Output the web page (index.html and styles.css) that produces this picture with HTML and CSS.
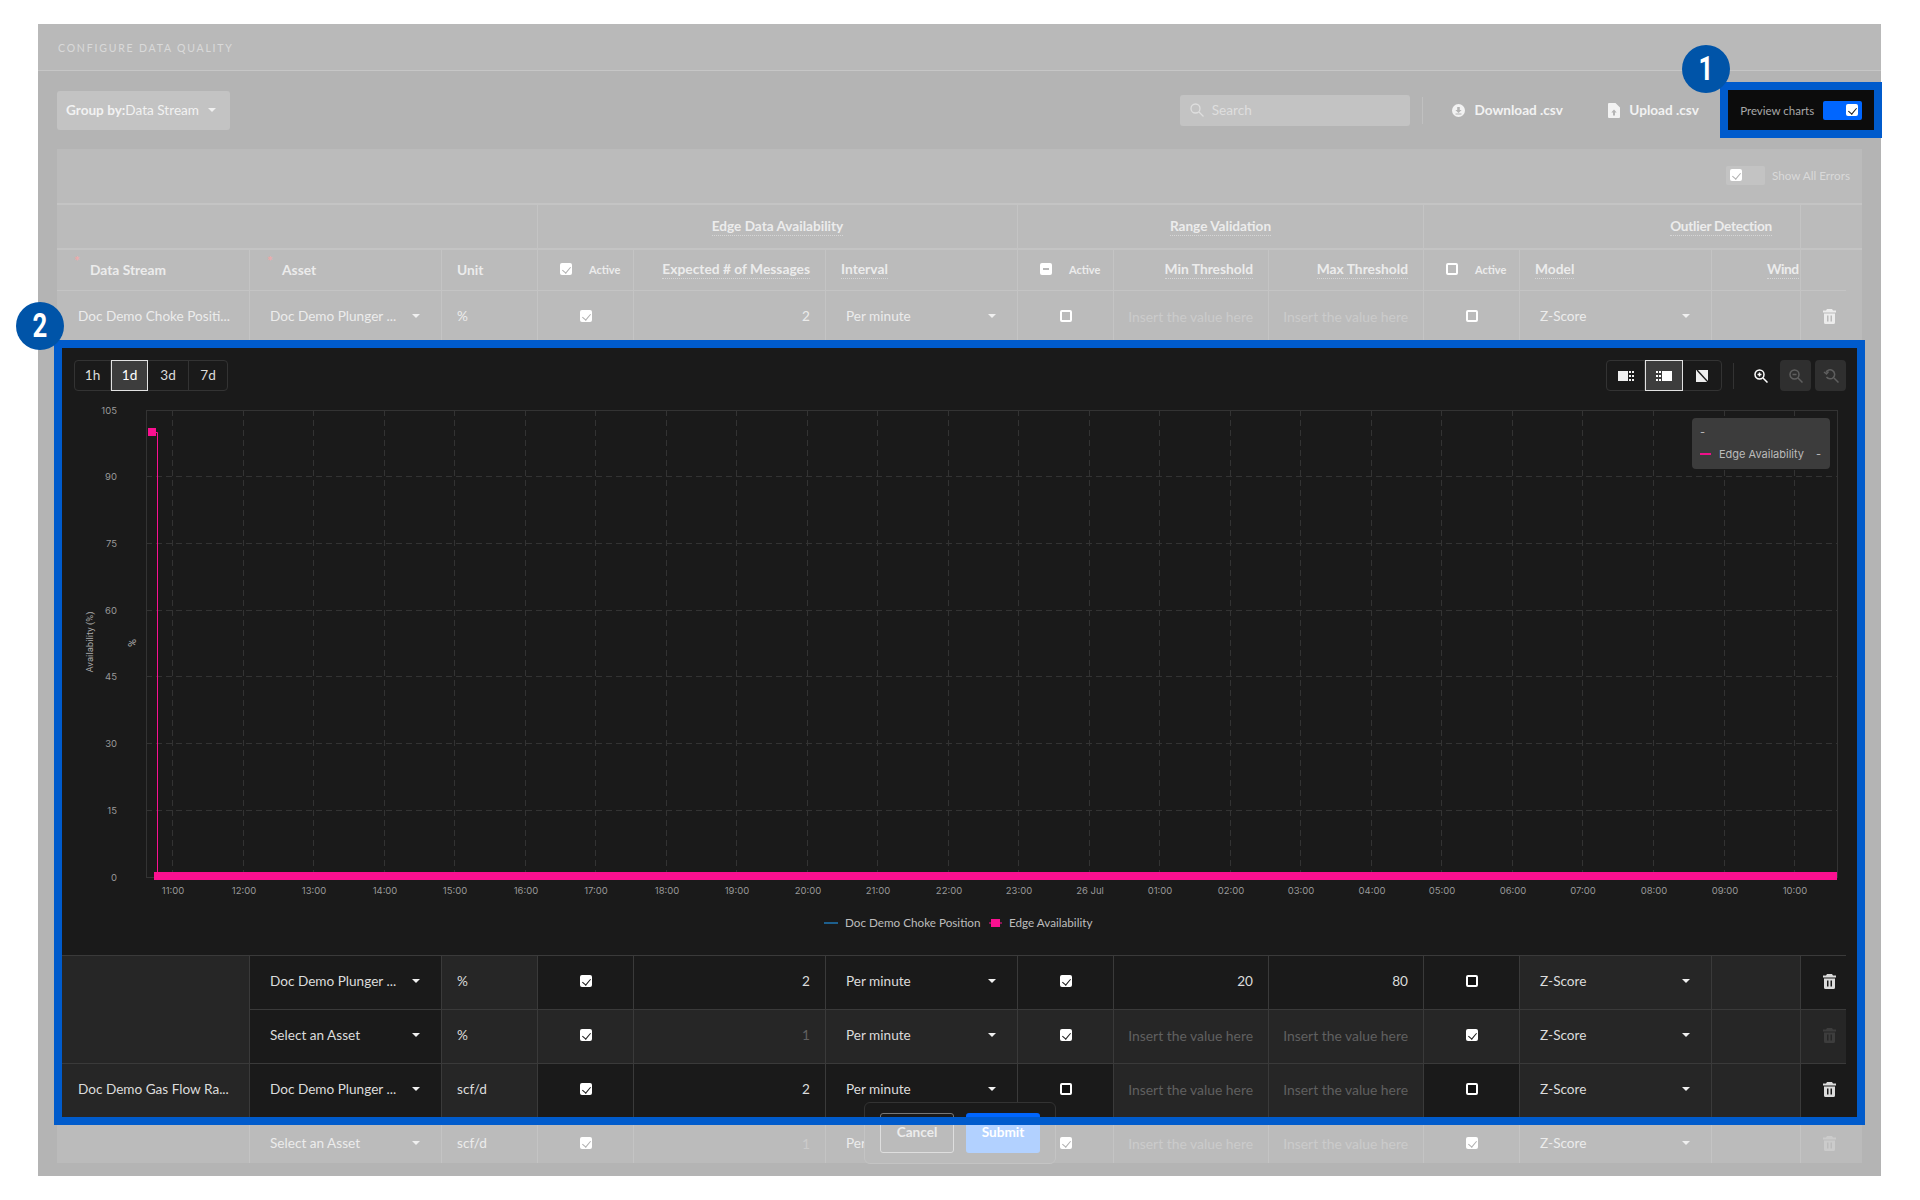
FILE: index.html
```html
<!DOCTYPE html>
<html lang="en">
<head>
    <meta charset="UTF-8">
    <title>Configure Data Quality</title>
    <link rel="stylesheet" href="styles.css">
</head>
<body>
    <svg class="defs" width="0" height="0">
        <symbol id="trash" viewBox="0 0 13 15">
            <path fill-rule="evenodd" d="M4 0h5l1 1.5h3v2H0v-2h3zM1 4.5h11v9a1.5 1.5 0 0 1-1.5 1.5h-8A1.5 1.5 0 0 1 1 13.5zM4 6.5v6h1.5v-6zM7.5 6.5v6H9v-6z"/>
        </symbol>
    </svg>

    <div class="page">
        <div class="badge badge-one"><span>1</span></div>
        <div class="badge badge-two"><span>2</span></div>

        <div class="title-bar">CONFIGURE DATA QUALITY</div>

        <div class="toolbar">
            <div class="group-by"><b>Group by:</b>Data Stream<i class="caret"></i></div>
            <div class="search">
                <svg width="14" height="14" viewBox="0 0 14 14" fill="none" stroke="currentColor" stroke-width="1.3"><circle cx="5.5" cy="5.5" r="4.5"/><path d="M9 9l4.5 4.5"/></svg>
                <span>Search</span>
            </div>
            <div class="divider"></div>
            <div class="action action-download">
                <svg width="13" height="13" viewBox="0 0 13 13"><path fill="currentColor" fill-rule="evenodd" d="M6.5 0a6.5 6.5 0 1 1 0 13a6.5 6.5 0 0 1 0-13zM5.2 3v3H3.4l3.1 3l3.1-3H7.800V3zM3.500 9.600v1h6v-1z"/></svg>
                Download .csv
            </div>
            <div class="action action-upload">
                <svg width="12" height="15" viewBox="0 0 12 15"><path fill="currentColor" fill-rule="evenodd" d="M1 0h6.500L12 4.500V14a1 1 0 0 1-1 1H1a1 1 0 0 1-1-1V1a1 1 0 0 1 1-1zM6 6.500L3.300 9.500h1.700v3h2v-3h1.700z"/></svg>
                Upload .csv
            </div>
            <div class="preview">
                <span>Preview charts</span>
                <div class="switch"><i class="check on"></i></div>
            </div>
        </div>

        <div class="table-wrap">
            <div class="errors-bar">
                <div class="errors-switch"><i class="check on"></i></div>
                <span>Show All Errors</span>
            </div>

            <div class="row-head groups">
                <div class="group-cell"></div>
                <div class="group-cell"><u>Edge Data Availability</u></div>
                <div class="group-cell"><u>Range Validation</u></div>
                <div class="group-cell outlier"><u>Outlier Detection</u></div>
                <div class="group-cell"></div>
            </div>

            <div class="row-head row">
                <div class="cell head pad"><em>*</em>Data Stream</div>
                <div class="cell head pad"><em>*</em>Asset</div>
                <div class="cell head unit">Unit</div>
                <div class="cell head active"><i class="check on"></i><small>Active</small></div>
                <div class="cell head num"><u>Expected # of Messages</u></div>
                <div class="cell head interval"><u>Interval</u></div>
                <div class="cell head active"><i class="check mixed"></i><small>Active</small></div>
                <div class="cell head num"><u>Min Threshold</u></div>
                <div class="cell head num"><u>Max Threshold</u></div>
                <div class="cell head active"><i class="check off"></i><small>Active</small></div>
                <div class="cell head model"><u>Model</u></div>
                <div class="cell head window"><u>Wind</u></div>
                <div class="cell head"></div>
            </div>

            <div class="row dim">
                <div class="cell pad">Doc Demo Choke Positi...</div>
                <div class="cell pad select">Doc Demo Plunger ...<i class="caret"></i></div>
                <div class="cell unit">%</div>
                <div class="cell center"><i class="check on"></i></div>
                <div class="cell num">2</div>
                <div class="cell pad select">Per minute<i class="caret"></i></div>
                <div class="cell center"><i class="check off"></i></div>
                <div class="cell num hint">Insert the value here</div>
                <div class="cell num hint">Insert the value here</div>
                <div class="cell center"><i class="check off"></i></div>
                <div class="cell pad select">Z-Score<i class="caret"></i></div>
                <div class="cell"></div>
                <div class="cell trash"><svg width="13" height="15"><use href="#trash"/></svg></div>
            </div>

            <div class="frame">
                <div class="chart-panel">
                    <div class="chart-tools">
                        <div class="segments">
                            <div class="seg seg-1h">1h</div>
                            <div class="seg seg-1d current">1d</div>
                            <div class="seg seg-3d">3d</div>
                            <div class="seg seg-7d">7d</div>
                        </div>
                        <div class="segments modes">
                            <div class="seg">
                                <svg width="16" height="10" viewBox="0 0 16 10" fill="#eee"><path d="M0 0h10v10H0z"/><path d="M11 0h2v2h-2zM14 0h2v2h-2zM11 4h2v2h-2zM14 4h2v2h-2zM11 8h2v2h-2zM14 8h2v2h-2z"/></svg>
                            </div>
                            <div class="seg current">
                                <svg width="16" height="10" viewBox="0 0 16 10" fill="#fff"><path d="M6 0h10v10H6z"/><path d="M0 0h2v2H0zM3 0h2v2H3zM0 4h2v2H0zM3 4h2v2H3zM0 8h2v2H0zM3 8h2v2H3z"/></svg>
                            </div>
                            <div class="seg">
                                <svg width="12" height="12" viewBox="0 0 12 12"><path fill="#eee" d="M0 0h12v12H0z"/><path stroke="#1a1a1a" stroke-width="1.400" d="M1 0l11 12"/></svg>
                            </div>
                        </div>
                        <div class="tool-divider"></div>
                        <div class="tool">
                            <svg width="14" height="14" viewBox="0 0 14 14" fill="none" stroke="#fff" stroke-width="1.500"><circle cx="5.500" cy="5.500" r="4.500"/><path d="M9 9l4.500 4.500M3.500 5.500h4M5.500 3.500v4"/></svg>
                        </div>
                        <div class="tool off">
                            <svg width="14" height="14" viewBox="0 0 14 14" fill="none" stroke="#5f5f5f" stroke-width="1.500"><circle cx="5.500" cy="5.500" r="4.500"/><path d="M9 9l4.500 4.500M3.500 5.500h4"/></svg>
                        </div>
                        <div class="tool off">
                            <svg width="16" height="14" viewBox="0 0 16 14" fill="none" stroke="#5f5f5f" stroke-width="1.500"><path d="M3 3.500a4.500 4.500 0 1 1 .5 4.500M11 9l4.500 4.500"/><path d="M1 3l2.500 2L5.500 2.500"/></svg>
                        </div>
                    </div>

                    <svg class="chart" width="1795" height="555" viewBox="62 400 1795 555">
                        <rect class="plot" x="146.500" y="410.500" width="1691" height="467"/>
                        <path class="grid" d="M172.500 410V877M243.500 410V877M313.500 410V877M384.500 410V877M454.500 410V877M525.500 410V877M595.500 410V877M666.500 410V877M736.500 410V877M807.500 410V877M877.500 410V877M948.500 410V877M1018.500 410V877M1089.500 410V877M1159.500 410V877M1230.500 410V877M1300.500 410V877M1371.500 410V877M1441.500 410V877M1512.500 410V877M1582.500 410V877M1653.500 410V877M1724.500 410V877M1794.500 410V877"/>
                        <path class="grid" d="M146 476.500H1838M146 543.500H1838M146 610.500H1838M146 676.500H1838M146 743.500H1838M146 810.500H1838"/>

                        <g class="y-labels">
                            <text x="117" y="414">105</text>
                            <text x="117" y="480">90</text>
                            <text x="117" y="547">75</text>
                            <text x="117" y="614">60</text>
                            <text x="117" y="680">45</text>
                            <text x="117" y="747">30</text>
                            <text x="117" y="814">15</text>
                            <text x="117" y="881">0</text>
                        </g>
                        <text class="axis-name" transform="translate(93 642) rotate(-90)">Availability (%)</text>
                        <text class="axis-name axis-unit" transform="translate(136 643) rotate(-90)">%</text>

                        <g class="x-labels">
                            <text x="173" y="894">11:00</text>
                            <text x="244" y="894">12:00</text>
                            <text x="314" y="894">13:00</text>
                            <text x="385" y="894">14:00</text>
                            <text x="455" y="894">15:00</text>
                            <text x="526" y="894">16:00</text>
                            <text x="596" y="894">17:00</text>
                            <text x="667" y="894">18:00</text>
                            <text x="737" y="894">19:00</text>
                            <text x="808" y="894">20:00</text>
                            <text x="878" y="894">21:00</text>
                            <text x="949" y="894">22:00</text>
                            <text x="1019" y="894">23:00</text>
                            <text x="1090" y="894">26 Jul</text>
                            <text x="1160" y="894">01:00</text>
                            <text x="1231" y="894">02:00</text>
                            <text x="1301" y="894">03:00</text>
                            <text x="1372" y="894">04:00</text>
                            <text x="1442" y="894">05:00</text>
                            <text x="1513" y="894">06:00</text>
                            <text x="1583" y="894">07:00</text>
                            <text x="1654" y="894">08:00</text>
                            <text x="1725" y="894">09:00</text>
                            <text x="1795" y="894">10:00</text>
                        </g>

                        <path class="series" d="M155 432.500h2.500V873"/>
                        <rect class="series-fill" x="148" y="428" width="8" height="8"/>
                        <rect class="series-fill" x="154" y="872" width="1683" height="8"/>

                        <path class="legend-line" d="M824 923h14"/>
                        <text class="legend" x="845" y="927">Doc Demo Choke Position</text>
                        <path class="series" d="M989 923h13"/>
                        <rect class="series-fill" x="991" y="919" width="9" height="8"/>
                        <text class="legend" x="1009" y="927">Edge Availability</text>
                    </svg>

                    <div class="chart-tip">
                        <div>-</div>
                        <div class="tip-row"><i></i><span>Edge Availability</span><span>-</span></div>
                    </div>
                </div>

                <div class="row lit">
                    <div class="cell raised"></div>
                    <div class="cell pad select">Doc Demo Plunger ...<i class="caret"></i></div>
                    <div class="cell raised unit">%</div>
                    <div class="cell center"><i class="check on"></i></div>
                    <div class="cell num">2</div>
                    <div class="cell pad select">Per minute<i class="caret"></i></div>
                    <div class="cell center"><i class="check on"></i></div>
                    <div class="cell num">20</div>
                    <div class="cell num">80</div>
                    <div class="cell center"><i class="check off"></i></div>
                    <div class="cell raised pad select">Z-Score<i class="caret"></i></div>
                    <div class="cell raised"></div>
                    <div class="cell trash"><svg width="13" height="15"><use href="#trash"/></svg></div>
                </div>
                <div class="row lit">
                    <div class="cell raised no-top"></div>
                    <div class="cell pad select">Select an Asset<i class="caret"></i></div>
                    <div class="cell raised unit">%</div>
                    <div class="cell raised center"><i class="check on"></i></div>
                    <div class="cell raised num faded">1</div>
                    <div class="cell raised pad select">Per minute<i class="caret"></i></div>
                    <div class="cell raised center"><i class="check on"></i></div>
                    <div class="cell raised num hint">Insert the value here</div>
                    <div class="cell raised num hint">Insert the value here</div>
                    <div class="cell raised center"><i class="check on"></i></div>
                    <div class="cell raised pad select">Z-Score<i class="caret"></i></div>
                    <div class="cell raised"></div>
                    <div class="cell raised trash faded"><svg width="13" height="15"><use href="#trash"/></svg></div>
                </div>
                <div class="row lit">
                    <div class="cell raised pad">Doc Demo Gas Flow Ra...</div>
                    <div class="cell pad select">Doc Demo Plunger ...<i class="caret"></i></div>
                    <div class="cell raised unit">scf/d</div>
                    <div class="cell center"><i class="check on"></i></div>
                    <div class="cell num">2</div>
                    <div class="cell pad select">Per minute<i class="caret"></i></div>
                    <div class="cell center"><i class="check off"></i></div>
                    <div class="cell raised num hint">Insert the value here</div>
                    <div class="cell raised num hint">Insert the value here</div>
                    <div class="cell center"><i class="check off"></i></div>
                    <div class="cell raised pad select">Z-Score<i class="caret"></i></div>
                    <div class="cell raised"></div>
                    <div class="cell trash"><svg width="13" height="15"><use href="#trash"/></svg></div>
                </div>

                <div class="footer-lit">
                    <div class="btn-cancel"></div>
                    <div class="btn-submit"></div>
                </div>
            </div>

            <div class="row dim last">
                <div class="cell"></div>
                <div class="cell pad select">Select an Asset<i class="caret"></i></div>
                <div class="cell unit">scf/d</div>
                <div class="cell center"><i class="check on"></i></div>
                <div class="cell num hint">1</div>
                <div class="cell pad select">Per minute<i class="caret"></i></div>
                <div class="cell center"><i class="check on"></i></div>
                <div class="cell num hint">Insert the value here</div>
                <div class="cell num hint">Insert the value here</div>
                <div class="cell center"><i class="check on"></i></div>
                <div class="cell pad select">Z-Score<i class="caret"></i></div>
                <div class="cell"></div>
                <div class="cell trash hint"><svg width="13" height="15"><use href="#trash"/></svg></div>
            </div>

            <div class="footer">
                <div class="btn-cancel">Cancel</div>
                <div class="btn-submit">Submit</div>
            </div>
        </div>
    </div>
</body>
</html>
```

FILE: styles.css
```css
* {
    box-sizing: border-box;
}

body {
    margin: 0;
    background-color: #fff;
    font-family: Lato, "Open Sans", sans-serif;
    font-size: 13.6px;
}

.defs {
    position: absolute;
}

.page {
    position: relative;
    width: 1843px;
    height: 1152px;
    margin: 24px 0 0 38px;
    padding-bottom: 13px;
    background-color: #b4b4b4;
}

.badge {
    position: absolute;
    z-index: 3;
    width: 48px;
    height: 48px;
    border-radius: 50%;
    background-color: #0054a8;
    color: #fff;
    font-family: Roboto, sans-serif;
    font-size: 33px;
    font-weight: 700;
    line-height: 48px;
    text-align: center;
}

.badge span {
    display: block;
    transform: scaleX(0.78);
}

.badge-one { left: 1644px; top: 21px; }
.badge-two { left: -22px; top: 278px; }

.title-bar {
    height: 47px;
    padding: 18px 0 0 20px;
    border-bottom: 1px solid #c6c6c6;
    background-color: #b9b9b9;
    color: #d9d9d9;
    font-size: 10.5px;
    letter-spacing: 1.8px;
    line-height: 12px;
}

.toolbar {
    display: flex;
    align-items: center;
    height: 78px;
    padding: 0 7px 0 19px;
    color: #f2f2f2;
    font-weight: 700;
}

.group-by {
    display: flex;
    align-items: center;
    width: 173px;
    height: 39px;
    padding-left: 9px;
    border-radius: 3px;
    background-color: #c3c3c3;
    font-weight: 400;
}

.group-by b {
    font-weight: 700;
}

.group-by .caret {
    margin-left: 9px;
}

.caret {
    display: block;
    width: 0;
    height: 0;
    border-top: 4px solid #f0f0f0;
    border-left: 4px solid transparent;
    border-right: 4px solid transparent;
}

.search {
    display: flex;
    align-items: center;
    gap: 8px;
    width: 231px;
    height: 31px;
    margin-left: 950px;
    padding-left: 10px;
    border-radius: 3px;
    background-color: #c3c3c3;
    color: #dedede;
    font-weight: 400;
}

.divider {
    width: 1px;
    height: 27px;
    margin-left: 12px;
    background-color: #c0c0c0;
}

.action {
    display: flex;
    align-items: center;
    gap: 9px;
    white-space: nowrap;
}

.action-download {
    width: 111px;
    margin-left: 29px;
}

.action-upload {
    width: 92px;
    margin-left: 45px;
}

.preview {
    display: flex;
    align-items: center;
    justify-content: space-between;
    width: 146px;
    height: 40px;
    margin-left: 28px;
    padding: 0 12px;
    outline: 8px solid #005bcc;
    background-color: #0c0c0c;
    color: #a8a8a8;
    font-size: 11.5px;
    font-weight: 400;
}

.switch {
    display: flex;
    align-items: center;
    justify-content: flex-end;
    width: 39px;
    height: 19px;
    padding-right: 4px;
    border-radius: 2px;
    background-color: #0066ff;
}

.check {
    position: relative;
    display: block;
    flex: none;
    width: 12px;
    height: 12px;
    border-radius: 2px;
    background-color: #fff;
}

.check.on::after {
    content: "";
    position: absolute;
    left: 4px;
    top: 2px;
    width: 4px;
    height: 7px;
    border-right: 1.5px solid #1a1a1a;
    border-bottom: 1.5px solid #1a1a1a;
    transform: rotate(40deg);
}

.check.off {
    border: 2px solid #fff;
    background-color: transparent;
}

.check.mixed::after {
    content: "";
    position: absolute;
    left: 3px;
    top: 5px;
    width: 6px;
    height: 2px;
    background-color: #b8b8b8;
}

.table-wrap {
    position: relative;
    width: 1805px;
    margin-left: 19px;
    background-color: #bbb;
    color: #ececec;
}

.errors-bar {
    display: flex;
    align-items: center;
    justify-content: flex-end;
    gap: 7px;
    height: 54px;
    padding: 0 12px 2px 0;
    color: #d9d9d9;
    font-size: 11.7px;
}

.errors-switch {
    width: 39px;
    height: 19px;
    padding: 3px 4px;
    border-radius: 2px;
    background-color: #c3c3c3;
}

.row-head {
    border-top: 2px solid #c4c4c4;
}

.groups {
    display: grid;
    grid-template-columns: 480px 480px 406px 377px 46px;
    height: 45px;
}

.group-cell {
    display: flex;
    align-items: center;
    justify-content: center;
    border-left: 1px solid #c4c4c4;
    font-weight: 700;
}

.group-cell:first-child {
    border-left: 0;
}

.group-cell.outlier {
    justify-content: flex-end;
    padding-right: 28px;
    letter-spacing: -0.25px;
}

u {
    padding-bottom: 1px;
    border-bottom: 1px dotted #d6d6d6;
    text-decoration: none;
}

.row {
    display: grid;
    grid-template-columns: 192px 192px 96px 96px 192px 192px 96px 155px 155px 96px 192px 89px 46px;
}

.cell {
    display: flex;
    align-items: center;
    height: 54px;
    padding-bottom: 3px;
    overflow: hidden;
    border-left: 1px solid #c4c4c4;
    border-top: 1px solid #c4c4c4;
    white-space: nowrap;
}

.cell:first-child {
    border-left: 0;
}

.cell.head {
    position: relative;
    height: 40px;
    padding-bottom: 2px;
    border-top: 0;
    font-size: 13.8px;
    font-weight: 700;
}

.head em {
    position: absolute;
    left: 17px;
    top: 2px;
    color: #eaa;
    font-style: normal;
}

.head.pad {
    padding-left: 32px;
}

.head.pad:first-child {
    padding-left: 33px;
}

.head.active {
    padding-left: 22px;
}

.head.active small {
    margin-left: 17px;
    font-size: 11px;
}

.head.unit,
.head.interval,
.head.model {
    padding-left: 15px;
}

.head.window {
    padding-left: 55px;
    letter-spacing: -0.5px;
}

.pad {
    padding-left: 20px;
}

.pad:first-child {
    padding-left: 21px;
}

.unit {
    padding-left: 15px;
}

.center {
    justify-content: center;
    padding-left: 1px;
}

.num {
    justify-content: flex-end;
    padding-right: 15px;
}

.hint {
    font-size: 13.9px;
}

.select {
    justify-content: space-between;
    padding-right: 21px;
}

.trash {
    padding-left: 22px;
}

.trash svg {
    fill: currentColor;
}

.dim .hint {
    color: #cbcbcb;
}

.dim .check.on::after,
.errors-bar .check.on::after,
.head .check.on::after {
    border-color: #b0b0b0;
}

.last {
    height: 46px;
    overflow: hidden;
}

.frame {
    position: relative;
    z-index: 2;
    height: 785px;
    margin: -4px -3px -8px;
    overflow: hidden;
    border: 8px solid #005bcc;
    background-color: #1a1a1a;
    color: #dcdcdc;
}

.chart-panel {
    position: relative;
    height: 607px;
    padding-top: 12px;
}

.chart-tools {
    display: flex;
    align-items: center;
    height: 31px;
    margin-bottom: 9px;
    padding: 0 11px 0 12px;
}

.segments {
    display: flex;
    height: 31px;
    border: 1px solid #333;
    border-radius: 4px;
    color: #dcdcdc;
}

.modes {
    margin-left: auto;
}

.seg {
    display: flex;
    align-items: center;
    justify-content: center;
    width: 38px;
    padding-bottom: 2px;
    border-right: 1px solid #333;
}

.modes .seg {
    padding-bottom: 0;
}

.seg-1h { width: 36px; }
.seg-1d { width: 37px; }
.seg-3d { width: 41px; }
.seg-7d { width: 38px; }

.seg:last-child {
    border-right: 0;
}

.seg.current {
    margin: -1px 0;
    border: 1px solid #e2e2e2;
    background-color: #3d3d3d;
    color: #fff;
}

.tool-divider {
    width: 1px;
    height: 26px;
    margin: 0 7px 0 11px;
    background-color: #333;
}

.tool {
    display: flex;
    align-items: center;
    justify-content: center;
    width: 31px;
    height: 31px;
    margin-left: 4px;
    border-radius: 4px;
}

.tool.off {
    background-color: #2f2f2f;
}

.chart {
    display: block;
}

.plot {
    fill: none;
    stroke: #333;
}

.grid {
    fill: none;
    stroke: #333;
    stroke-dasharray: 6 4;
}

.y-labels text,
.x-labels text {
    fill: #999;
    font-family: Inter, sans-serif;
    font-size: 9.500px;
}

.y-labels text {
    text-anchor: end;
}

.x-labels text,
.axis-name {
    text-anchor: middle;
}

.axis-name {
    fill: #aaa;
    font-family: Roboto, sans-serif;
    font-size: 9.500px;
}

.axis-unit {
    font-size: 11px;
}

.series {
    fill: none;
    stroke: #fa1090;
}

.series-fill {
    fill: #fa1090;
}

.legend-line {
    stroke: #1f77b4;
    stroke-width: 1.500;
}

.legend {
    fill: #bdbdbd;
    font-size: 11.700px;
}

.chart-tip {
    position: absolute;
    left: 1630px;
    top: 70px;
    width: 138px;
    height: 51px;
    padding: 7px 8px;
    border-radius: 4px;
    background-color: #3c3c3c;
    color: #bbb;
    font-family: Inter, sans-serif;
    font-size: 11px;
    line-height: 14px;
}

.tip-row {
    display: flex;
    align-items: center;
    margin-top: 8px;
}

.tip-row i {
    width: 11px;
    height: 2px;
    margin-right: 8px;
    background-color: #f0108a;
}

.tip-row span:last-child {
    margin-left: 12px;
}

.lit {
    width: 1789px;
    margin-left: -5px;
}

.lit .cell {
    border-color: #3a3a3a;
}

.lit .raised {
    background-color: #262626;
}

.lit .no-top {
    border-top-color: #262626;
}

.lit .hint,
.lit .faded {
    color: #606060;
}

.lit .trash.faded {
    color: #3d3d3d;
}

.lit .check.off {
    background-color: #111;
}

.footer,
.footer-lit {
    position: absolute;
    display: flex;
    gap: 12px;
    width: 192px;
    height: 62px;
    padding: 10px 15px;
    border-radius: 6px;
}

.footer {
    z-index: 1;
    left: 807px;
    top: 953px;
    border: 1px solid #c4c4c4;
    background-color: #bbb;
}

.footer-lit {
    left: 802px;
    top: 754px;
    border: 1px solid #333;
    background-color: #1a1a1a;
}

.btn-cancel,
.btn-submit {
    display: flex;
    align-items: center;
    justify-content: center;
    width: 74px;
    height: 40px;
    padding-bottom: 3px;
    border-radius: 3px;
    font-weight: 700;
}

.btn-cancel {
    border: 1px solid #dedede;
}

.btn-submit {
    background-color: #b2d1ff;
    color: #fff;
}

.footer-lit .btn-cancel {
    border-color: #777;
}

.footer-lit .btn-submit {
    background-color: #0066ff;
}
```
